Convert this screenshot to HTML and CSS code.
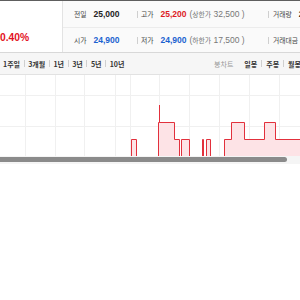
FILE: index.html
```html
<!DOCTYPE html>
<html lang="ko">
<head>
<meta charset="utf-8">
<link rel="stylesheet" href="styles.css">
</head>
<body>
<div class="page">
  <div class="top-rule"></div>
  <div class="summary">
    <div class="rate-cell"><span class="rate">0.40%</span></div>
    <div class="table">
      <div class="row">
        <div class="item c1"><span class="ko lbl">전일</span><b class="num">25,000</b></div>
        <div class="item c2"><i class="bar"></i><span class="ko lbl">고가</span><b class="num up">25,200</b><span class="limit">(<span class="ko">상한가</span> 32,500 )</span></div>
        <div class="item c3"><i class="bar"></i><span class="ko lbl">거래량</span><b class="num">2</b></div>
      </div>
      <div class="row">
        <div class="item c1"><span class="ko lbl">시가</span><b class="num down">24,900</b></div>
        <div class="item c2"><i class="bar"></i><span class="ko lbl">저가</span><b class="num down">24,900</b><span class="limit">(<span class="ko">하한가</span> 17,500 )</span></div>
        <div class="item c3"><i class="bar"></i><span class="ko lbl">거래대금</span></div>
      </div>
    </div>
  </div>
  <div class="tabs">
    <div class="periods">
      <span class="tab">1주일</span><i class="bar"></i>
      <span class="tab">3개월</span><i class="bar"></i>
      <span class="tab">1년</span><i class="bar"></i>
      <span class="tab">3년</span><i class="bar"></i>
      <span class="tab">5년</span><i class="bar"></i>
      <span class="tab">10년</span>
    </div>
    <div class="kinds">
      <span class="tab muted">봉차트</span>
      <span class="tab gap">일봉</span><i class="bar"></i>
      <span class="tab">주봉</span><i class="bar"></i>
      <span class="tab">월봉</span>
    </div>
  </div>
  <div class="chart">
    <svg width="300" height="81" viewBox="0 0 300 81">
      <g stroke="#f0f0f0" stroke-width="1">
        <line x1="0" y1="20.5" x2="300" y2="20.5"/>
        <line x1="0" y1="51.5" x2="300" y2="51.5"/>
        <line x1="25.5" y1="0" x2="25.5" y2="81"/>
        <line x1="55.5" y1="0" x2="55.5" y2="81"/>
        <line x1="84.5" y1="0" x2="84.5" y2="81"/>
        <line x1="115.5" y1="0" x2="115.5" y2="81"/>
        <line x1="130.5" y1="0" x2="130.5" y2="81"/>
        <line x1="159.5" y1="0" x2="159.5" y2="81"/>
        <line x1="189.5" y1="0" x2="189.5" y2="81"/>
        <line x1="219.5" y1="0" x2="219.5" y2="81"/>
        <line x1="249.5" y1="0" x2="249.5" y2="81"/>
        <line x1="279.5" y1="0" x2="279.5" y2="81"/>
      </g>
      <path fill="#fde3e6" stroke="none" d="M131,82V64H136V82Z M158,82V47H174V64H179V82Z M181,82V64H189V82Z M202,82V64H203.5V82Z M206,82V64H210V82Z M224,82V64H231V47H244V64H264V47H275V64H300V82Z"/>
      <path fill="none" stroke="#e2303c" stroke-width="1" d="M131.5,82V64.5H136.5V82 M158.5,82V47.5H159.5V30V47.5H174.5V64.5H179.5V82 M181.5,82V64.5H189.5V82 M202.5,82V64.5H203.5V82 M206.5,82V64.5H210.5V82 M224.5,82V64.5H231.5V47.5H244.5V64.5H264.5V47.5H275.5V64.5H300"/>
    </svg>
  </div>
  <div class="track"><div class="thumb"></div></div>
</div>
</body>
</html>
```
FILE: styles.css
```css
html, body {
  margin: 0;
  padding: 0;
  background: #fff;
}
.page {
  width: 300px;
  overflow: hidden;
  font-family: "Liberation Sans", "Noto Sans CJK KR", sans-serif;
  color: #222;
}
.top-rule {
  height: 1px;
  background: #5e5e5e;
}
.summary {
  display: flex;
  height: 51px;
  border-bottom: 1px solid #d8d8d8;
}
.rate-cell {
  width: 63px;
  flex: none;
  border-right: 1px solid #e3e3e3;
  display: flex;
  align-items: flex-end;
  padding-bottom: 8px;
  box-sizing: border-box;
}
.rate {
  font-size: 10.3px;
  font-weight: bold;
  color: #e3121e;
  line-height: 12px;
}
.table {
  flex: 1;
  background: #fafafa;
  display: flex;
  flex-direction: column;
}
.row {
  display: grid;
  grid-template-columns: 74px 131px 1fr;
  height: 26px;
  white-space: nowrap;
}
.row + .row {
  height: 24px;
  border-top: 1px solid #ececec;
}
.item {
  display: flex;
  align-items: center;
  overflow: hidden;
}
.c1 {
  padding-left: 11px;
}
.ko {
  font-family: "Noto Sans CJK KR", sans-serif;
  font-size: 6.8px;
}
.lbl {
  color: #444;
  margin-right: 7px;
}
.num {
  font-size: 8.5px;
  font-weight: bold;
  color: #222;
}
.num.up { color: #dd1c24; }
.num.down { color: #1b62d0; }
.limit {
  font-size: 8.5px;
  color: #777;
  margin-left: 3px;
}
.bar {
  display: inline-block;
  width: 1px;
  height: 7px;
  background: #cfcfcf;
  flex: none;
}
.item .bar {
  margin-right: 3px;
}
.c3 .bar {
  margin-right: 4px;
}
.tabs {
  display: flex;
  align-items: center;
  height: 21px;
  background: #f6f6f6;
  border-bottom: 1px solid #e2e2e2;
  white-space: nowrap;
}
.periods, .kinds {
  display: flex;
  align-items: center;
  gap: 4px;
}
.periods {
  padding-left: 3px;
  gap: 3.6px;
}
.kinds {
  margin-left: auto;
  margin-right: -1px;
}
.tab {
  font-family: "Noto Sans CJK KR", sans-serif;
  font-size: 7px;
  font-weight: bold;
  color: #333;
}
.tab.muted {
  color: #999;
  font-weight: normal;
}
.tab.gap {
  margin-left: 7px;
}
.chart {
  height: 81px;
}
.chart svg {
  display: block;
}
.track {
  height: 8px;
  background: #f5f5f5;
  padding-top: 1px;
  box-sizing: border-box;
}
.thumb {
  width: 287px;
  height: 5px;
  background: #8b8b8b;
  border-radius: 0 3px 3px 0;
}
```
